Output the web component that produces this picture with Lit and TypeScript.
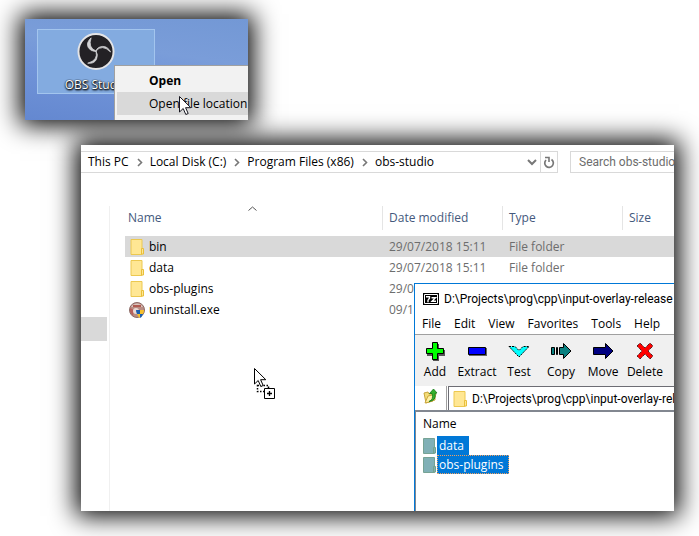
import { LitElement, html, css, svg } from "lit";
import { customElement } from "lit/decorators.js";

const folderIcon = html`<svg class="folder" width="14" height="16" viewBox="0 0 14 16" aria-hidden="true">
  <path d="M1 .5h11v15H1z" fill="#ffe794" stroke="#ecc850" />
  <path d="M11.500 9.500h2v5.500h-2z" fill="#ffe794" stroke="#e9bf3b" />
</svg>`;

const selectedFolderIcon = html`<svg class="folder" width="14" height="16" viewBox="0 0 14 16" aria-hidden="true">
  <path d="M.5 .5h11v15H.5z" fill="#80b0b6" stroke="#76a394" />
  <path d="M10.500 9.500h2v5.500h-2z" fill="#80b0b6" stroke="#76a38a" />
</svg>`;

const uninstallIcon = html`<svg class="folder exe" width="16" height="16" viewBox="0 0 16 16" aria-hidden="true">
  <circle cx="8" cy="8" r="7.500" fill="#b98c83" stroke="#8b6a66" />
  <path d="M2 5a7 7 0 0 1 12 0z" fill="#d8c4bc" />
  <path d="M4 4h8" stroke="#b05a50" stroke-width="2" />
  <path d="M1 6l4 2-1 6-3-4z" fill="#b8605a" />
  <circle cx="7" cy="9" r="3" fill="#ead9d4" />
  <path d="M7 8h4v4H8q-1-2-1-4z" fill="#1c5fae" />
  <path d="M11 8h4q0 2-1 4h-3z" fill="#f5c02c" />
  <path d="M8 12h3v4q-2-1-3-4z" fill="#f5c02c" />
  <path d="M11 12h3q-1 3-3 4z" fill="#1c5fae" />
</svg>`;

const chevron = html`<svg class="chevron" width="6" height="9" viewBox="0 0 6 9" aria-hidden="true">
  <path d="M1 1l3.500 3.500L1 8" fill="none" stroke="#777" stroke-width="1.600" />
</svg>`;

const pointerPath = "M.5 .5v15.500l3.700-3.500 2.600 6 2.400-1-2.600-5.800h5.200z";

const files = [
  { name: "bin", date: "29/07/2018 15:11", type: "File folder", icon: folderIcon, on: true },
  { name: "data", date: "29/07/2018 15:11", type: "File folder", icon: folderIcon, on: false },
  { name: "obs-plugins", date: "29/07", type: "", icon: folderIcon, on: false },
  { name: "uninstall.exe", date: "09/12", type: "", icon: uninstallIcon, on: false },
];

const tools = [
  {
    label: "Add",
    art: svg`<path d="M9 3h6v6h6v6h-6v6H9v-6H3V9h6z" fill="#555"/>
      <path d="M8.500 1.500h5v6h6v5h-6v6h-5v-6h-6v-5h6z" fill="#0f0" stroke="#000"/>`,
  },
  {
    label: "Extract",
    art: svg`<path d="M3 7h18v8H3z" fill="#666"/><path d="M2.500 6.500h17v7h-17z" fill="#00f" stroke="#000"/>`,
  },
  {
    label: "Test",
    art: svg`<path d="M1 5.500h6l4 4 4-4h6L11 16z" fill="#0ff" stroke="#000" stroke-dasharray="2 1"/>`,
  },
  {
    label: "Copy",
    art: svg`<path d="M1.500 6.500h3v7h-3zM6.500 6.500h1v7h-1zM9.500 6.500h4v-4l7.500 7.500-7.500 7.500v-4h-4z" fill="#088080" stroke="#000"/>`,
  },
  {
    label: "Move",
    art: svg`<path d="M1.500 6.500h12v-4l7.500 7.500-7.500 7.500v-4h-12z" fill="#000080" stroke="#000"/>`,
  },
  {
    label: "Delete",
    art: svg`<path d="M3 5l3-3 5 5 5-5 3 3-5 5 5 5-3 3-5-5-5 5-3-3 5-5z" fill="#f00" stroke="#000" stroke-dasharray="1 1"/>`,
  },
];

@customElement("desktop-shot")
class DesktopShot extends LitElement {
  static styles = css`
    :host {
      display: block;
      height: 101px;
      position: relative;
      overflow: hidden;
      font: 12px/16px "Open Sans", "Noto Sans", sans-serif;
      background: linear-gradient(8deg, #6488d0 0%, #7093d8 40%, #7a9dd9 65%, #7398d5 100%);
    }
    .shortcut {
      box-sizing: border-box;
      width: 118px;
      height: 65px;
      margin: 10px 0 0 12px;
      padding: 2px 0 0;
      border: 1px solid #a3c5ee;
      background: #83abe0;
      font: inherit;
      color: #fff;
      display: flex;
      flex-direction: column;
      align-items: center;
      gap: 6px;
      text-shadow: 1px 1px 2px #000, 0 1px 2px #000, 0 0 1px #000;
    }
    .menu {
      position: absolute;
      left: 89px;
      top: 46px;
      right: 0;
      bottom: 0;
      padding: 3px 0 0 2px;
      border: solid #a0a0a0;
      border-width: 1px 0 0 1px;
      background: #f2f2f2;
    }
    .item {
      display: block;
      width: 100%;
      height: 23px;
      padding: 0 0 0 32px;
      border: 0;
      background: none;
      font: inherit;
      color: #000;
      text-align: left;
      white-space: nowrap;
    }
    .default {
      font-weight: 700;
    }
    .hover {
      background: #d9d9d9;
    }
    .pointer {
      position: absolute;
      left: 154px;
      top: 77px;
    }
  `;
  render() {
    return html`
      <button class="shortcut">
        <svg width="40" height="40" viewBox="0 0 40 40" aria-hidden="true">
          <circle cx="20" cy="20" r="18" fill="#232125" stroke="#e4e4e6" stroke-width="2" />
          <g fill="#d2d2d4" stroke="#d2d2d4" stroke-linejoin="round" stroke-width=".8">
            <path d="M20 19.500Q11.500 16 15 6Q9.500 11 12 16Q14.500 20 20 20z" />
            <path d="M20 19.500Q26 12 35 20.500Q32 14.500 26.500 14.800Q21 15.500 20 19.500z" />
            <path d="M20 19.500Q22.500 29 11.500 32Q18 33 20.500 28Q22.500 23 20 19.500z" />
          </g>
        </svg>
        <span>OBS Studio</span>
      </button>
      <div class="menu">
        <button class="item default">Open</button>
        <button class="item hover">Open file location</button>
      </div>
      <svg class="pointer" width="13" height="20" viewBox="0 0 13 20" aria-hidden="true">
        <path d=${pointerPath} fill="#fff" stroke="#15151f" />
      </svg>
    `;
  }
}

@customElement("archive-window")
class ArchiveWindow extends LitElement {
  static styles = css`
    :host {
      display: flex;
      flex-direction: column;
      overflow: hidden;
      border: solid #0078d7;
      border-width: 1px 0 0 1px;
      background: #fff;
      color: #000;
      font: 12px/16px "Open Sans", "Noto Sans", sans-serif;
      white-space: nowrap;
    }
    svg {
      flex: none;
    }
    button {
      border: 0;
      padding: 0;
      background: none;
      font: inherit;
      color: inherit;
    }
    .title {
      display: flex;
      align-items: center;
      gap: 5px;
      height: 30px;
      padding-left: 8px;
      font-family: Roboto, "Open Sans", sans-serif;
    }
    .menus {
      display: flex;
      gap: 13px;
      height: 20px;
      padding-left: 7px;
      border-bottom: 1px solid #a0a0a0;
    }
    .menus button {
      height: 20px;
    }
    .tools {
      display: flex;
      gap: 4px;
      height: 51px;
      padding-left: 1px;
      background: #f0f0f0;
    }
    .tools button {
      flex: none;
      width: 38px;
      display: flex;
      flex-direction: column;
      align-items: center;
      padding-top: 6px;
      gap: 3px;
    }
    .path {
      display: flex;
      height: 24px;
      border-bottom: 2px solid #828790;
    }
    .up {
      width: 32px;
      border-right: 1px solid #a0a0a0;
    }
    .combo {
      flex: 1;
      min-width: 0;
      display: flex;
      align-items: center;
      gap: 5px;
      margin-left: 1px;
      padding-left: 4px;
      border: solid #6d6d74;
      border-width: 1px 0 0 1px;
    }
    .combo input {
      flex: 1;
      min-width: 0;
      border: 0;
      padding: 0;
      font: inherit;
      font-family: Roboto, "Open Sans", sans-serif;
      color: inherit;
    }
    .list {
      flex: 1;
      padding: 3px 0 0 7px;
      border-left: 1px solid #828790;
      line-height: 18px;
    }
    .heading {
      height: 21px;
    }
    .entry {
      display: flex;
      align-items: center;
      height: 19px;
    }
    .label {
      height: 17px;
      padding: 0 4px 0 1px;
      border: 1px solid #0078d7;
      background: #0078d7;
      color: #fff;
    }
    .focus {
      border: 1px dotted #f0a060;
    }
  `;
  render() {
    return html`
      <div class="title">
        <svg width="16" height="12" viewBox="0 0 16 12" aria-hidden="true">
          <path d="M0 0h16v12H0z" />
          <path d="M1.500 1.500h13v9h-13z" fill="none" stroke="#fff" />
          <path d="M3 3.700h3.500v1.500l-1.500 2v2M8.500 4.700h4l-3.500 3.600h4" fill="none" stroke="#fff" stroke-width="1.400" />
        </svg>
        <span>D:\\Projects\\prog\\cpp\\input-overlay-release</span>
      </div>
      <nav class="menus">
        ${["File", "Edit", "View", "Favorites", "Tools", "Help"].map((m) => html`<button>${m}</button>`)}
      </nav>
      <div class="tools">
        ${tools.map(
          (t) => html`<button>
            <svg width="22" height="20" viewBox="0 0 22 20" aria-hidden="true">${t.art}</svg>
            <span>${t.label}</span>
          </button>`
        )}
      </div>
      <div class="path">
        <button class="up" aria-label="Up one level">
          <svg width="16" height="16" viewBox="0 0 16 16" aria-hidden="true">
            <path d="M1 5l4-1 1 2 6-1v7l-9 3z" fill="#f3dc78" stroke="#c9a63c" />
            <path d="M2 15l3-7 8-2-3 7z" fill="#fff0a4" stroke="#c9a63c" />
            <path d="M6 13.500q5-2 3-8H6.500L10.500 1l3.500 4-2 .5q1.500 7-6 8z" fill="#35b02c" stroke="#147a18" stroke-width=".8" />
          </svg>
        </button>
        <label class="combo">
          ${folderIcon}
          <input aria-label="Folder path" value="D:\\Projects\\prog\\cpp\\input-overlay-release" />
        </label>
      </div>
      <div class="list">
        <div class="heading">Name</div>
        <div class="entry">${selectedFolderIcon}<span class="label">data</span></div>
        <div class="entry">${selectedFolderIcon}<span class="label focus">obs-plugins</span></div>
      </div>
    `;
  }
}

@customElement("file-explorer")
class FileExplorer extends LitElement {
  static styles = css`
    :host {
      display: flex;
      flex-direction: column;
      position: relative;
      min-height: 366px;
      overflow: hidden;
      background: #fff;
      color: #000;
      font: 12px/16px "Open Sans", "Noto Sans", sans-serif;
    }
    button {
      border: 0;
      padding: 0;
      background: none;
      font: inherit;
      color: inherit;
      white-space: nowrap;
    }
    .bar {
      display: flex;
      gap: 12px;
      height: 22px;
      margin-top: 6px;
    }
    .address {
      flex: 1;
      display: flex;
      align-items: center;
      border: solid #d9d9d9;
      border-width: 1px 1px 1px 0;
      padding-left: 7px;
    }
    .chevron {
      margin: 0 7px 0 8px;
    }
    .drop {
      margin-left: auto;
      width: 16px;
      height: 20px;
    }
    .refresh {
      width: 17px;
      height: 20px;
      border-left: 1px solid #d9d9d9;
    }
    .drop svg,
    .refresh svg {
      display: block;
      margin: auto;
    }
    .search {
      box-sizing: border-box;
      width: 104px;
      padding: 0 0 0 8px;
      border: solid #d9d9d9;
      border-width: 1px 0 1px 1px;
      border-radius: 0;
      font: inherit;
      font-family: Roboto, "Open Sans", sans-serif;
    }
    .search::placeholder {
      color: #6d6d6d;
    }
    .body {
      flex: 1;
      display: flex;
      margin-top: 33px;
    }
    .pane {
      width: 28px;
      border-right: 1px solid #f0f0f0;
    }
    .picked {
      width: 26px;
      height: 24px;
      margin-top: 111px;
      background: #d9d9d9;
    }
    .files {
      flex: 1;
      margin-left: 15px;
      position: relative;
    }
    table {
      width: 100%;
      table-layout: fixed;
      border-collapse: collapse;
    }
    .name {
      width: 257px;
    }
    .other {
      width: 120px;
    }
    th {
      height: 24px;
      padding: 0;
      font-weight: 400;
      text-align: left;
      color: #44597d;
    }
    th span {
      display: block;
      line-height: 24px;
      padding-left: 6px;
      border-left: 1px solid #e5e5e5;
    }
    th:first-child span {
      padding-left: 3px;
      border: 0;
    }
    thead tr {
      border-bottom: 6px solid #fff;
    }
    td {
      height: 21px;
      padding: 0 0 0 7px;
      color: #6d6d6d;
      white-space: nowrap;
    }
    td:first-child {
      padding-left: 5px;
      color: #000;
    }
    .file {
      display: flex;
      align-items: center;
      gap: 5px;
    }
    .file .exe {
      margin: 0 -1px;
    }
    .on {
      background: #d9d9d9;
    }
    .sort {
      position: absolute;
      left: 123px;
      top: 0;
    }
    archive-window {
      position: absolute;
      left: 333px;
      top: 138px;
      right: 0;
      bottom: 0;
    }
    .drag {
      position: absolute;
      left: 173px;
      top: 223px;
    }
  `;
  render() {
    return html`
      <div class="bar">
        <div class="address">
          <button>This PC</button>${chevron}
          <button>Local Disk (C:)</button>${chevron}
          <button>Program Files (x86)</button>${chevron}
          <button>obs-studio</button>
          <button class="drop" aria-label="Previous locations">
            <svg width="10" height="7" viewBox="0 0 10 7"><path d="M1 1l4 4 4-4" fill="none" stroke="#777" stroke-width="2" /></svg>
          </button>
          <button class="refresh" aria-label="Refresh">
            <svg width="12" height="13" viewBox="0 0 12 13">
              <path d="M8.500 3.500a4.300 4.300 0 1 1-5.500 .5" fill="none" stroke="#777" stroke-width="1.700" />
              <path d="M2 1.500h4V6" fill="none" stroke="#777" stroke-width="1.600" />
            </svg>
          </button>
        </div>
        <input class="search" type="text" aria-label="Search" placeholder="Search obs-studio" />
      </div>
      <div class="body">
        <div class="pane"><div class="picked"></div></div>
        <div class="files">
          <table>
            <colgroup>
              <col class="name" />
              <col class="other" />
              <col class="other" />
              <col />
            </colgroup>
            <thead>
              <tr>
                <th><span>Name</span></th>
                <th><span>Date modified</span></th>
                <th><span>Type</span></th>
                <th><span>Size</span></th>
              </tr>
            </thead>
            <tbody>
              ${files.map(
                (f) => html`<tr class=${f.on ? "on" : ""}>
                  <td><div class="file">${f.icon}<span>${f.name}</span></div></td>
                  <td>${f.date}</td>
                  <td>${f.type}</td>
                  <td></td>
                </tr>`
              )}
            </tbody>
          </table>
          <svg class="sort" width="9" height="5" viewBox="0 0 9 5" aria-hidden="true">
            <path d="M.5 4.500l4-3.500 4 3.500" fill="none" stroke="#555" />
          </svg>
        </div>
      </div>
      <archive-window></archive-window>
      <svg class="drag" width="22" height="32" viewBox="0 0 22 32" aria-hidden="true">
        <path d="M3.500 17.500h11v6h-11z" fill="#fff" stroke="#000" stroke-width="1.500" stroke-dasharray="1.500 1.500" />
        <path d=${pointerPath} fill="#fff" stroke="#000" />
        <path d="M10.500 20.500h10v10h-10z" fill="#fff" stroke="#000" />
        <path d="M15.500 23v5M13 25.500h5" stroke="#000" stroke-width="1.300" />
      </svg>
    `;
  }
}

@customElement("app-root")
class AppRoot extends LitElement {
  static styles = css`
    :host {
      display: grid;
      grid-template-columns: 56px 167fr 426fr;
      row-gap: 25px;
      padding: 19px 25px 25px;
      background: #fff;
      isolation: isolate;
    }
    .panel {
      position: relative;
      min-width: 0;
    }
    .panel::before {
      content: "";
      position: absolute;
      inset: 0;
      z-index: -1;
      box-shadow: 0 0 24px 5px #000;
    }
    .desktop {
      grid-column: 1 / 3;
    }
    .explorer {
      grid-column: 2 / 4;
    }
  `;
  render() {
    return html`
      <div class="panel desktop"><desktop-shot></desktop-shot></div>
      <div class="panel explorer"><file-explorer></file-explorer></div>
    `;
  }
}
